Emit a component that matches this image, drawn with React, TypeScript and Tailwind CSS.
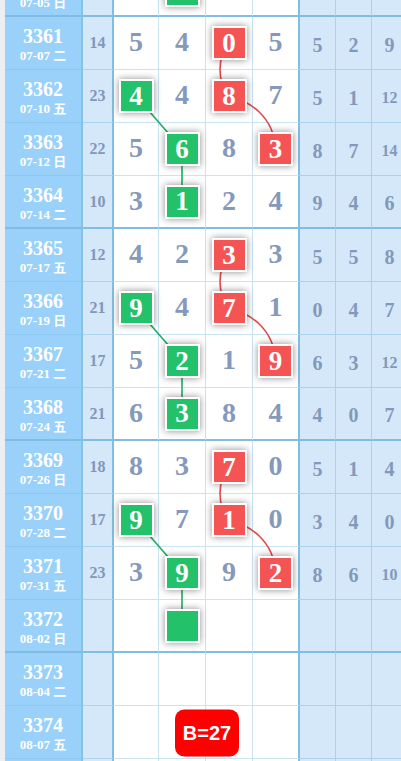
import React from "react"

type Row = {
  p: string
  d: string
  s?: string
  n?: number[]
  r?: number[]
  g?: number
  red?: number
  boxOnly?: boolean
  badge?: string
}

const rows: Row[] = [
  { p: "3360", d: "07-05 日", g: 1, boxOnly: true },
  { p: "3361", d: "07-07 二", s: "14", n: [5, 4, 0, 5], r: [5, 2, 9], red: 2 },
  { p: "3362", d: "07-10 五", s: "23", n: [4, 4, 8, 7], r: [5, 1, 12], g: 0, red: 2 },
  { p: "3363", d: "07-12 日", s: "22", n: [5, 6, 8, 3], r: [8, 7, 14], g: 1, red: 3 },
  { p: "3364", d: "07-14 二", s: "10", n: [3, 1, 2, 4], r: [9, 4, 6], g: 1 },
  { p: "3365", d: "07-17 五", s: "12", n: [4, 2, 3, 3], r: [5, 5, 8], red: 2 },
  { p: "3366", d: "07-19 日", s: "21", n: [9, 4, 7, 1], r: [0, 4, 7], g: 0, red: 2 },
  { p: "3367", d: "07-21 二", s: "17", n: [5, 2, 1, 9], r: [6, 3, 12], g: 1, red: 3 },
  { p: "3368", d: "07-24 五", s: "21", n: [6, 3, 8, 4], r: [4, 0, 7], g: 1 },
  { p: "3369", d: "07-26 日", s: "18", n: [8, 3, 7, 0], r: [5, 1, 4], red: 2 },
  { p: "3370", d: "07-28 二", s: "17", n: [9, 7, 1, 0], r: [3, 4, 0], g: 0, red: 2 },
  { p: "3371", d: "07-31 五", s: "23", n: [3, 9, 9, 2], r: [8, 6, 10], g: 1, red: 3 },
  { p: "3372", d: "08-02 日", g: 1, boxOnly: true },
  { p: "3373", d: "08-04 二" },
  { p: "3374", d: "08-07 五", badge: "B=27" },
  { p: "3375", d: "08-09 日" },
]

// page x of digit column centres, row pitch 53px
const colX = [136, 182, 229, 275.5]
const cy = (i: number) => i * 53 + 26

const serif = "font-['Liberation_Serif','Noto_Sans_CJK_SC',serif]"
const digitW = ["w-[45px]", "w-[47px]", "w-[47px]", "w-[47px]"]

function Box({ v, red }: { v?: number; red?: boolean }) {
  return (
    <div
      className={`relative z-20 flex h-[34px] w-[35px] items-center justify-center border-2 border-white shadow-[0_0_7px_rgba(0,0,0,0.45)] ${
        red ? "bg-[#f45454]" : "bg-[#23c16a]"
      }`}
    >
      <span className={`${serif} text-[27px] font-bold leading-none text-white`}>{v}</span>
    </div>
  )
}

function Lines() {
  const green: string[] = []
  const red: string[] = []
  for (let i = 1; i < rows.length; i++) {
    const a = rows[i - 1]
    const b = rows[i]
    if (a.g !== undefined && b.g !== undefined) {
      green.push(`M${colX[a.g]} ${cy(i - 1)} L${colX[b.g]} ${cy(i)}`)
    }
    if (a.red !== undefined && b.red !== undefined) {
      const x1 = colX[a.red]
      const y1 = cy(i - 1)
      const x2 = colX[b.red]
      const y2 = cy(i)
      if (x1 === x2) {
        red.push(`M${x1} ${y1} C${x1 - 12} ${y1 + 15} ${x1 - 12} ${y1 + 38} ${x2} ${y2}`)
      } else {
        red.push(`M${x1} ${y1} C${x1 + 20} ${y1 + 5} ${x1 + 45} ${y1 + 20} ${x2} ${y2}`)
      }
    }
  }
  return (
    <svg className="pointer-events-none absolute left-0 top-[-36px] z-10" width="401" height="860">
      {green.map((d, k) => (
        <path key={"g" + k} d={d} stroke="#1fae63" strokeWidth="1.6" fill="none" />
      ))}
      {red.map((d, k) => (
        <path key={"r" + k} d={d} stroke="#e14848" strokeWidth="1.6" fill="none" />
      ))}
    </svg>
  )
}

export default function App() {
  return (
    <div className="relative h-[761px] w-[401px] overflow-hidden bg-[#eceff2] pl-[5px]">
      <div className="-mt-[36px]">
        {rows.map((row) => {
          const groupEnd = Number(row.p) % 4 === 0
          const hb = groupEnd ? "border-b-2 border-b-[#80bde0]" : "border-b"
          return (
            <div key={row.p} className="flex h-[53px] w-[420px]">
              <div
                className={`flex w-[78px] shrink-0 flex-col items-center justify-center border-r-2 border-r-[#86c2e4] bg-[#99d1fb] pt-[4px] ${hb} ${
                  groupEnd ? "" : "border-b-[#8cc8ef]"
                }`}
              >
                <span className={`${serif} text-[20px] font-bold leading-[20px] text-white`}>{row.p}</span>
                <span className={`${serif} mt-[2px] text-[13px] font-bold leading-[16px] text-white`}>{row.d}</span>
              </div>
              <div
                className={`flex w-[31px] shrink-0 items-center justify-center border-r-2 border-r-[#80bde0] bg-[#d4e8f9] ${hb} ${
                  groupEnd ? "" : "border-b-[#a9d3ee]"
                }`}
              >
                <span className={`${serif} text-[16px] font-bold text-[#8197bb]`}>{row.s}</span>
              </div>
              <div className="relative flex">
                {[0, 1, 2, 3].map((c) => {
                  const isG = row.g === c
                  const isR = row.red === c
                  return (
                    <div
                      key={c}
                      className={`flex ${digitW[c]} shrink-0 items-center justify-center bg-white ${
                        c === 3 ? "border-r-2 border-r-[#80bde0]" : "border-r border-r-[#c9e4f0]"
                      } ${hb} ${groupEnd ? "" : "border-b-[#c9e4f0]"}`}
                    >
                      {isG ? (
                        <Box v={row.boxOnly ? undefined : row.n?.[c]} />
                      ) : isR ? (
                        <Box v={row.n?.[c]} red />
                      ) : (
                        <span className={`${serif} -mt-[2px] text-[28px] font-bold leading-none text-[#8599bb]`}>
                          {row.n?.[c]}
                        </span>
                      )}
                    </div>
                  )
                })}
                {row.badge && (
                  <div className="absolute left-1/2 top-1/2 z-20 flex h-[47px] w-[64px] -translate-x-1/2 -translate-y-1/2 items-center justify-center rounded-[9px] bg-[#ff0000]">
                    <span className="font-['Liberation_Sans',Arial,sans-serif] text-[20px] font-bold text-white">
                      {row.badge}
                    </span>
                  </div>
                )}
              </div>
              {[0, 1, 2].map((c) => {
                const v = row.r?.[c]
                return (
                  <div
                    key={c}
                    className={`flex w-[36px] shrink-0 items-center justify-center border-r border-r-[#a9d3ec] bg-[#d5e8f9] ${hb} ${
                      groupEnd ? "" : "border-b-[#a9d3ec]"
                    }`}
                  >
                    <span
                      className={`${serif} mt-[3px] font-bold text-[#8399bc] ${
                        v !== undefined && v > 9 ? "text-[16px]" : "text-[20px]"
                      }`}
                    >
                      {v}
                    </span>
                  </div>
                )
              })}
            </div>
          )
        })}
      </div>
      <Lines />
    </div>
  )
}
